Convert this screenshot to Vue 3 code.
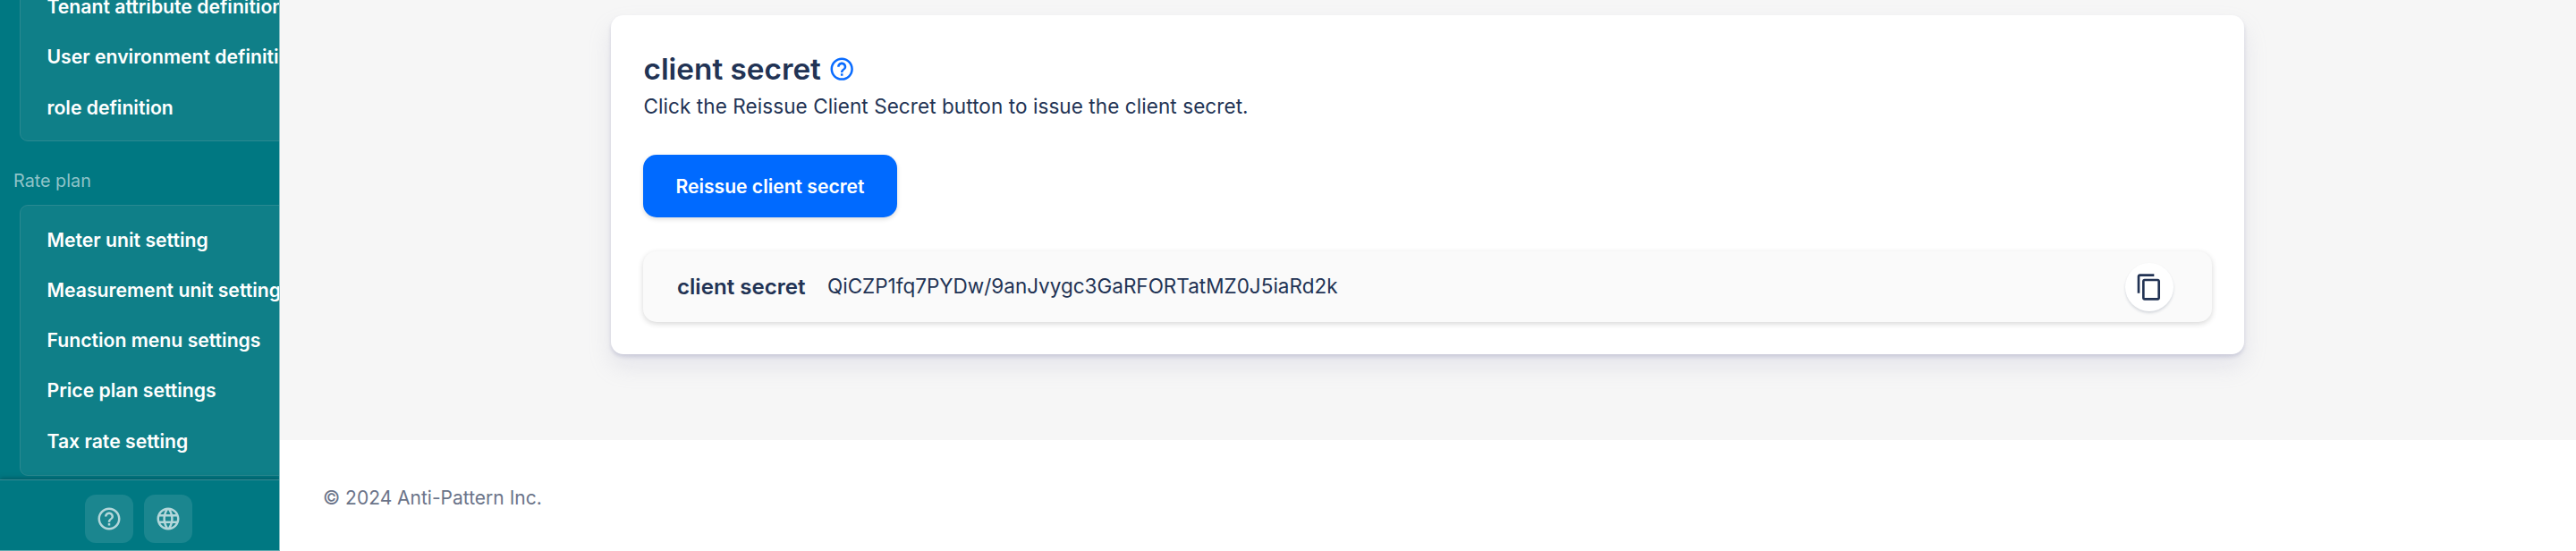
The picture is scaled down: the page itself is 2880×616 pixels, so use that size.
<script setup>
const attributes = ['Tenant attribute definition', 'User environment definition', 'role definition']
const ratePlan = ['Meter unit setting', 'Measurement unit settings', 'Function menu settings', 'Price plan settings', 'Tax rate setting']
const helpPath = 'M11 18h2v-2h-2v2zm1-16C6.48 2 2 6.48 2 12s4.48 10 10 10 10-4.48 10-10S17.52 2 12 2zm0 18c-4.41 0-8-3.59-8-8s3.59-8 8-8 8 3.59 8 8-3.59 8-8 8zm0-14c-2.21 0-4 1.79-4 4h2c0-1.1.9-2 2-2s2 .9 2 2c0 2-3 1.75-3 5h2c0-2.25 3-2.5 3-5 0-2.21-1.79-4-4-4z'
const globePath = 'M11.99 2C6.47 2 2 6.48 2 12s4.47 10 9.99 10C17.52 22 22 17.52 22 12S17.52 2 11.99 2zm6.93 6h-2.95c-.32-1.25-.78-2.45-1.38-3.56 1.84.63 3.37 1.91 4.33 3.56zM12 4.04c.83 1.2 1.48 2.53 1.91 3.96h-3.82c.43-1.43 1.08-2.76 1.91-3.96zM4.26 14C4.1 13.36 4 12.69 4 12s.1-1.36.26-2h3.38c-.08.66-.14 1.32-.14 2s.06 1.34.14 2H4.26zm.82 2h2.95c.32 1.25.78 2.45 1.38 3.56-1.84-.63-3.37-1.9-4.33-3.56zm2.95-8H5.08c.96-1.66 2.49-2.93 4.33-3.56C8.81 5.55 8.35 6.75 8.03 8zM12 19.96c-.83-1.2-1.48-2.53-1.91-3.96h3.82c-.43 1.43-1.08 2.76-1.91 3.96zM14.34 14H9.66c-.09-.66-.16-1.32-.16-2s.07-1.35.16-2h4.68c.09.65.16 1.32.16 2s-.07 1.34-.16 2zm.25 5.56c.6-1.11 1.06-2.31 1.38-3.56h2.95c-.96 1.65-2.49 2.93-4.33 3.56zM16.36 14c.08-.66.14-1.32.14-2s-.06-1.34-.14-2h3.38c.16.64.26 1.31.26 2s-.1 1.36-.26 2h-3.38z'
const copyPath = 'M16 1H4c-1.1 0-2 .9-2 2v14h2V3h12V1zm3 4H8c-1.1 0-2 .9-2 2v14c0 1.1.9 2 2 2h11c1.1 0 2-.9 2-2V7c0-1.1-.9-2-2-2zm0 16H8V7h11v14z'
</script>

<template>
  <div class="page">
    <aside class="sidebar">
      <div class="menu">
        <ul class="group first">
          <li v-for="t in attributes" :key="t">{{ t }}</li>
        </ul>
        <div class="heading">Rate plan</div>
        <ul class="group">
          <li v-for="t in ratePlan" :key="t">{{ t }}</li>
        </ul>
      </div>
      <div class="tools">
        <button class="tool" aria-label="Help"><svg viewBox="0 0 24 24"><path :d="helpPath" /></svg></button>
        <button class="tool" aria-label="Language"><svg viewBox="0 0 24 24"><path :d="globePath" /></svg></button>
      </div>
    </aside>
    <div class="content">
      <main class="main">
        <section class="card">
          <h2 class="title"><span>client secret</span><svg viewBox="0 0 24 24"><path :d="helpPath" /></svg></h2>
          <p class="desc">Click the Reissue Client Secret button to issue the client secret.</p>
          <button class="reissue">Reissue client secret</button>
          <div class="secret">
            <span class="label">client secret</span>
            <span class="value">QiCZP1fq7PYDw/9anJvygc3GaRFORTatMZ0J5iaRd2k</span>
            <button class="copy" aria-label="Copy"><svg viewBox="0 0 24 24"><path :d="copyPath" /></svg></button>
          </div>
        </section>
      </main>
      <footer class="footer">© 2024 Anti-Pattern Inc.</footer>
    </div>
  </div>
</template>

<style>
html, body { overflow: hidden; }
</style>

<style scoped>
.page {
  display: flex;
  height: 616px;
  overflow: hidden;
  font-family: Inter, "Liberation Sans", sans-serif;
  color: #223354;
}
.page * { box-sizing: border-box; }
button { border: 0; padding: 0; font: inherit; }
svg { display: block; fill: currentColor; }

.sidebar {
  flex: none;
  width: 313px;
  display: flex;
  flex-direction: column;
  background: #007882;
  border-right: 1px solid #8cc2c7;
  border-bottom: 1px solid #5eaab0;
  overflow: hidden;
}
.menu { height: 536px; overflow: hidden; }
.group {
  width: 420px;
  height: 303px;
  margin: 0 0 0 21.5px;
  padding: 10px 0 0 30px;
  list-style: none;
  border: 1px solid #2a8991;
  border-radius: 9px;
  background: #0f7f88;
  color: #fff;
}
.group.first { height: 186.5px; margin-top: -29px; padding-top: 7px; }
.group li {
  height: 56.3px;
  line-height: 56.3px;
  font-size: 21.2px;
  font-weight: 600;
  white-space: nowrap;
}
.heading {
  height: 71px;
  padding: 27.5px 0 0 15px;
  line-height: 34px;
  font-size: 19.8px;
  color: #8fc4c9;
}
.tools {
  flex: 1;
  display: flex;
  gap: 12px;
  padding: 16px 0 0 95px;
  border-top: 1px solid #398c94;
  box-shadow: 0 -1px 5px rgba(0, 50, 60, 0.5);
}
.tool {
  width: 54px;
  height: 54px;
  display: grid;
  place-items: center;
  border-radius: 12px;
  background: #1b868f;
  color: #b3d7da;
}
.tool svg { width: 30px; height: 30px; }

.content { flex: 1; display: flex; flex-direction: column; }
.main {
  height: 492px;
  padding: 16.5px 371px 0 370px;
  background: #f6f6f6;
}
.card {
  height: 379.5px;
  padding: 36.5px 36px 0;
  border-radius: 14px;
  background: #fff;
  box-shadow: 0 14px 26px rgba(159, 162, 191, 0.2), 0 3px 4px rgba(159, 162, 191, 0.4);
}
.title {
  display: flex;
  align-items: center;
  gap: 8px;
  margin: 0;
  height: 48px;
  padding-left: 0.5px;
  font-size: 33.3px;
  font-weight: 600;
}
.title svg { width: 30.4px; height: 30.4px; color: #0a6cff; }
.desc { margin: 0; height: 72px; padding-left: 0.5px; line-height: 35px; font-size: 22.5px; letter-spacing: 0.08px; }
.reissue {
  display: block;
  width: 284px;
  height: 70px;
  border-radius: 15px;
  background: #006aff;
  color: #fff;
  font-size: 21.1px;
  font-weight: 600;
  box-shadow: 0 2px 5px rgba(0, 0, 0, 0.15);
}
.secret {
  display: flex;
  align-items: center;
  height: 79px;
  margin-top: 38px;
  padding: 0 43.5px 0 38px;
  border-radius: 15px;
  background: #fafafa;
  box-shadow: 0 2px 6px rgba(0, 0, 0, 0.16);
}
.label { width: 168px; font-size: 24.1px; font-weight: 600; }
.value { padding-bottom: 1.5px; font-size: 22.5px; }
.copy {
  width: 54px;
  height: 54px;
  margin-left: auto;
  display: grid;
  place-items: center;
  border-radius: 50%;
  background: #fff;
  color: #223354;
  box-shadow: 0 2px 3px rgba(34, 51, 84, 0.17);
}
.copy svg { width: 32px; height: 32px; }
.footer {
  flex: 1;
  padding: 47px 0 0 48px;
  line-height: 36px;
  font-size: 21px;
  color: #6b7489;
  background: #fff;
}
</style>
